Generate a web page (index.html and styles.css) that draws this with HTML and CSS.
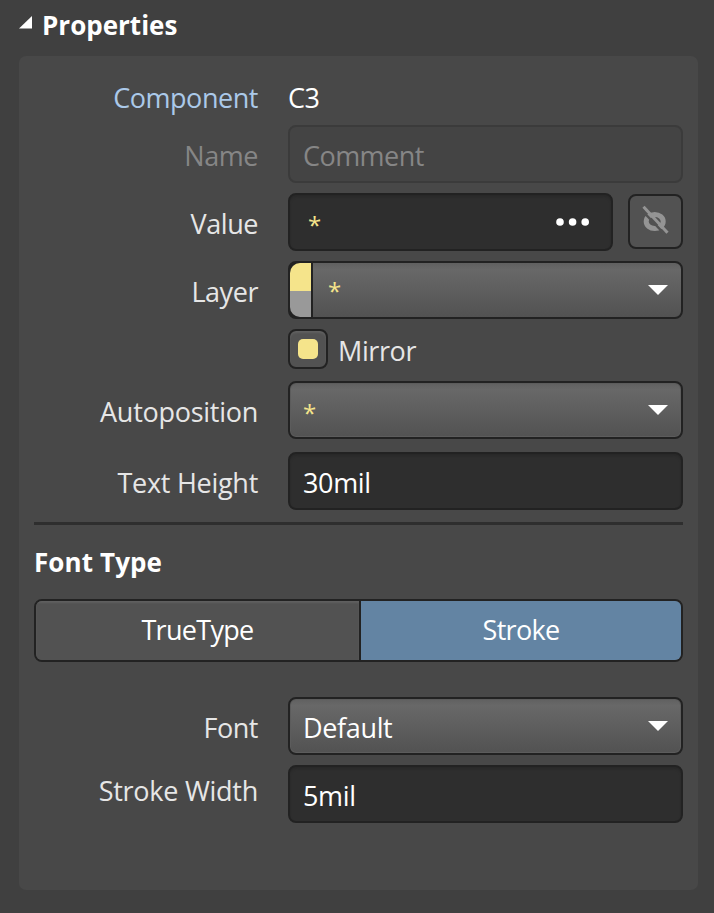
FILE: index.html
```html
<!DOCTYPE html>
<html lang="en">
<head>
<meta charset="utf-8">
<title>Properties</title>
<link rel="stylesheet" href="styles.css">
</head>
<body>
<header class="section-header">
  <svg class="collapse" width="13" height="13" viewBox="0 0 13 13"><path d="M13 0V12.5H0Z"/></svg>
  <h1 class="title">Properties</h1>
</header>
<main class="panel">
  <div class="row row-component">
    <span class="label link">Component</span>
    <span class="plain">C3</span>
  </div>
  <div class="row row-name">
    <span class="label muted">Name</span>
    <div class="field disabled"><span class="comment">Comment</span></div>
  </div>
  <div class="row row-value">
    <span class="label">Value</span>
    <div class="value-group">
      <div class="field input"><span class="star inset">*</span>
        <svg class="dots" width="34" height="8" viewBox="0 0 34 8"><circle cx="4" cy="4" r="3.8"/><circle cx="16.6" cy="4" r="3.8"/><circle cx="29.2" cy="4" r="3.8"/></svg>
      </div>
      <button class="eye" aria-label="Visibility">
        <svg width="28" height="30" viewBox="0 0 28 30"><ellipse class="ring" cx="13.700" cy="16.500" rx="8.500" ry="7"/><path class="gap" d="M1 5.500L24.500 30"/><path class="slash" d="M2.500 1.700L26.500 27.700"/></svg>
      </button>
    </div>
  </div>
  <div class="row row-layer">
    <span class="label">Layer</span>
    <div class="field select layer"><span class="swatch"></span><span class="star">*</span><svg class="arrow" width="20" height="10" viewBox="0 0 20 10"><path d="M0 0H20L10 10Z"/></svg></div>
  </div>
  <div class="row row-mirror">
    <span class="label"></span>
    <div class="check"><span class="box"><span class="tick"></span></span><span class="mirror">Mirror</span></div>
  </div>
  <div class="row row-auto">
    <span class="label long">Autoposition</span>
    <div class="field select"><span class="star">*</span><svg class="arrow" width="20" height="10" viewBox="0 0 20 10"><path d="M0 0H20L10 10Z"/></svg></div>
  </div>
  <div class="row row-height">
    <span class="label long">Text Height</span>
    <div class="field input"><span class="entry">30mil</span></div>
  </div>
  <hr class="divider">
  <h2 class="subtitle">Font Type</h2>
  <div class="segmented">
    <div class="segment">TrueType</div>
    <div class="segment active">Stroke</div>
  </div>
  <div class="row row-font">
    <span class="label">Font</span>
    <div class="field select"><span class="entry">Default</span><svg class="arrow" width="20" height="10" viewBox="0 0 20 10"><path d="M0 0H20L10 10Z"/></svg></div>
  </div>
  <div class="row row-stroke">
    <span class="label long">Stroke Width</span>
    <div class="field input"><span class="entry">5mil</span></div>
  </div>
</main>
</body>
</html>
```
FILE: styles.css
```css
* { box-sizing: border-box; }
body {
  margin: 0;
  height: 913px;
  overflow: hidden;
  background: #404040;
  color: #e6e6e6;
  font: 27px/38px "Open Sans", "Noto Sans", sans-serif;
}
h1, h2 { margin: 0; color: #fff; font-size: 26px; font-weight: 700; }
svg { display: block; flex: none; fill: #fff; }
.section-header { display: flex; height: 56px; padding: 6px 0 0 19px; }
.collapse { margin: 10px 10px 0 0; }
.panel {
  width: 679px;
  height: 834px;
  margin-left: 19px;
  padding: 23px 15px 0;
  border-radius: 7px;
  background: #484848;
}
.row { display: grid; grid-template-columns: 224px 395px; column-gap: 30px; white-space: nowrap; }
.label { padding-top: 12px; text-align: right; letter-spacing: -0.45px; }
.long { letter-spacing: -0.27px; }
.row-component { height: 46px; }
.row-component .label { padding-top: 0; }
.link { color: #abc9e9; }
.muted { color: #868686; }
.plain { color: #fff; letter-spacing: -0.4px; }
.row-name, .row-value, .row-layer { margin-bottom: 10px; }
.field {
  display: flex;
  height: 58px;
  padding: 10px 12px 0 13px;
  border: 2px solid #222;
  border-radius: 8px;
  color: #fff;
}
.input { background: #2e2e2e; box-shadow: inset 0 2px 2px #292929; }
.disabled { background: #444; border-color: #3b3b3b; color: #868686; }
.comment { letter-spacing: -0.55px; }
.entry { letter-spacing: -0.35px; }
.select { background: linear-gradient(#606060, #686868 12%, #525252); box-shadow: inset 0 0 0 1px #5c5c5c; }
.star { padding-top: 1px; color: #f5e48b; font-size: 24px; font-weight: 500; }
.inset { padding-left: 5px; }
.value-group { display: flex; justify-content: space-between; }
.value-group .field { width: 325px; }
.dots { margin: 13px 9px 0 auto; }
.eye {
  display: flex;
  align-items: flex-start;
  width: 55px;
  height: 55px;
  margin-top: 1px;
  padding: 9px 0 0 11px;
  border: 2px solid #222;
  border-radius: 8px;
  background: #525252;
}
.eye svg { fill: none; stroke: #949494; }
.ring { stroke-width: 5; }
.gap { stroke: #525252; stroke-width: 2.5; }
.slash { stroke-width: 3; }
.arrow { margin: 12px 1px 0 auto; }
.layer { padding-left: 0; }
.swatch {
  width: 23px;
  height: 54px;
  margin: -10px 15px 0 0;
  border-right: 2px solid #222;
  border-radius: 10px 0 0 10px;
  background: linear-gradient(#f5e48b 28px, #999 28px);
}
.layer { background: linear-gradient(90deg, #222 20px, transparent 20px), linear-gradient(#606060, #686868 12%, #525252); box-shadow: none; }
.layer .star { margin-top: -2px; }
.row-mirror { height: 52px; }
.check { display: flex; }
.box { width: 40px; height: 40px; margin-right: 10px; padding: 8px; border: 2px solid #222; border-radius: 8px; background: #525252; box-shadow: inset 0 2px 2px #606060; }
.tick { display: block; width: 20px; height: 20px; border-radius: 5px; background: #f5e48b; }
.mirror { padding-top: 3px; letter-spacing: -0.4px; }
.row-auto { margin-bottom: 13px; }
.divider { height: 3px; margin: 12px 0 18px; border: 0; background: #2e2e2e; }
.subtitle { height: 56px; letter-spacing: 0.1px; }
.segmented { display: flex; height: 63px; margin-bottom: 35px; border: 2px solid #222; border-radius: 8px; overflow: hidden; color: #fff; text-align: center; letter-spacing: -0.7px; }
.segment { width: 325px; padding-top: 10px; border-right: 2px solid #222; background: #525252; box-shadow: inset 0 2px 2px #606060; }
.segment.active { flex: 1; border: 0; background: #6384a3; box-shadow: none; }
.row-font { margin-bottom: 10px; }
.row-stroke .label { padding-top: 7px; }
```
